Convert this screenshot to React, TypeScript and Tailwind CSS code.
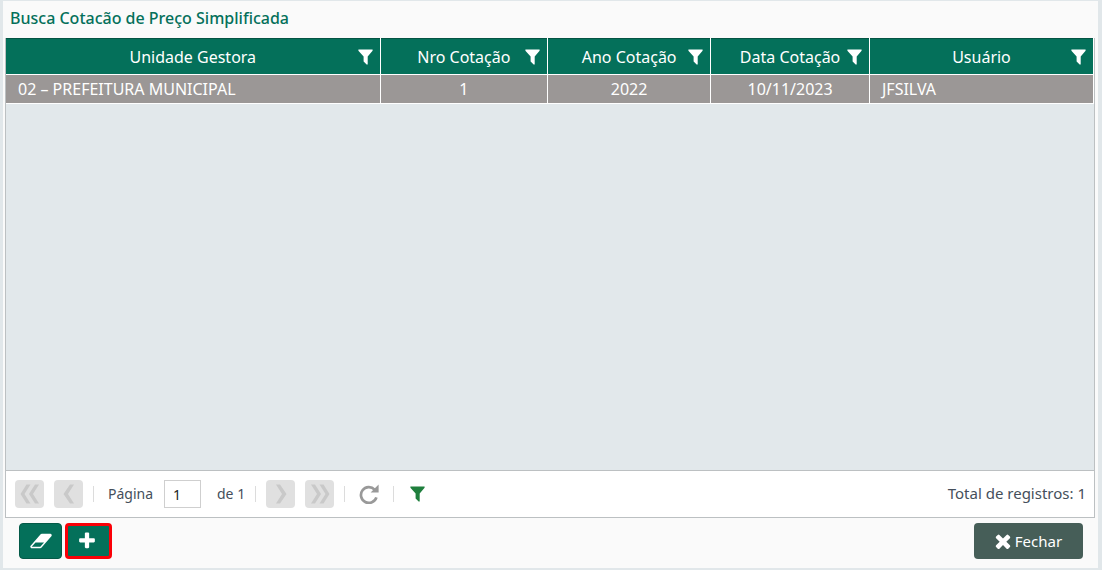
import type { ReactNode } from "react";

type IconProps = { className?: string };

function FilterIcon({ className }: IconProps) {
  return (
    <svg viewBox="0 0 15 16" className={className} fill="currentColor" aria-hidden="true">
      <path d="M0.4 0.5H14.6V1.8L9.7 7.4V15.4L8.6 15.4L5.6 12.6V7.4L0.4 1.8Z" />
    </svg>
  );
}

function EraserIcon() {
  return (
    <svg viewBox="0 0 2048 1792" className="h-5 w-6" fill="currentColor" aria-hidden="true">
      <path d="M960 1408l336-384h-768l-336 384h768zm1013-1077q15 34 9.5 71.5t-30.5 65.5l-896 1024q-38 44-96 44h-768q-38 0-69.5-20.5t-47.5-54.5q-15-34-9.5-71.5t30.5-65.5l896-1024q38-44 96-44h768q38 0 69.5 20.5t47.5 54.5z" />
    </svg>
  );
}

function PlusIcon() {
  return (
    <svg viewBox="0 0 1792 1792" className="size-5" fill="currentColor" aria-hidden="true">
      <path d="M1600 736v192q0 40-28 68t-68 28h-416v416q0 40-28 68t-68 28h-192q-40 0-68-28t-28-68v-416h-416q-40 0-68-28t-28-68v-192q0-40 28-68t68-28h416v-416q0-40 28-68t68-28h192q40 0 68 28t28 68v416h416q40 0 68 28t28 68z" />
    </svg>
  );
}

function TimesIcon() {
  return (
    <svg viewBox="240 240 1312 1312" className="size-4" fill="currentColor" aria-hidden="true">
      <path d="M1490 1322q0 40-28 68l-136 136q-28 28-68 28t-68-28l-294-294-294 294q-28 28-68 28t-68-28l-136-136q-28-28-28-68t28-68l294-294-294-294q-28-28-28-68t28-68l136-136q28-28 68-28t68 28l294 294 294-294q28-28 68-28t68 28l136 136q28 28 28 68t-28 68l-294 294 294 294q28 28 28 68z" />
    </svg>
  );
}

function RefreshIcon() {
  return (
    <svg viewBox="0 0 20 20" className="size-5" aria-hidden="true">
      <path d="M15.6 5.6A7.9 7.9 0 1 0 17.4 13.4" fill="none" stroke="currentColor" strokeWidth="2.7" />
      <path d="M19.6 0.6V8.4H11.6Z" fill="currentColor" />
    </svg>
  );
}

function Chevrons({ double, back }: { double?: boolean; back?: boolean }) {
  return (
    <svg
      viewBox="0 0 20 20"
      className={back ? "size-5 -scale-x-100" : "size-5"}
      fill="currentColor"
      aria-hidden="true"
    >
      {double ? (
        <>
          <path d="M1 0.5H5L11 10L5 19.5H1L7 10Z" />
          <path d="M9.5 0.5H13.5L19.5 10L13.5 19.5H9.5L15.5 10Z" />
        </>
      ) : (
        <path d="M5 0.5H9L15.5 10L9 19.5H5L11 10Z" />
      )}
    </svg>
  );
}

function PageButton({ label, children }: { label: string; children: ReactNode }) {
  return (
    <button
      type="button"
      disabled
      aria-label={label}
      className="flex h-7 w-[29px] items-center justify-center rounded bg-[#e0e0e0] text-[#c9c9c9]"
    >
      {children}
    </button>
  );
}

function Separator() {
  return <span className="h-4 w-px bg-[#dcdcdc]" />;
}

const columns = [
  { title: "Unidade Gestora", width: "w-[34.4%]" },
  { title: "Nro Cotação", width: "w-[15.4%]" },
  { title: "Ano Cotação", width: "w-[15%]" },
  { title: "Data Cotação", width: "w-[14.6%]" },
  { title: "Usuário", width: "w-[20.6%]" },
];

const rows = [["02 – PREFEITURA MUNICIPAL", "1", "2022", "10/11/2023", "JFSILVA"]];

export default function App() {
  return (
    <div className="flex min-h-screen flex-col bg-[#e1e7ea] pt-px pr-1 pb-[2px] pl-[3px] font-['Noto_Sans','Open_Sans',sans-serif] text-[#454f5b]">
      <main className="flex flex-1 flex-col bg-[#fafafa] pr-[3px] pl-[2px]">
        <h1 className="flex h-[37px] items-center px-[5px] pb-1 text-base font-medium text-[#04705a]">
          Busca Cotacão de Preço Simplificada
        </h1>

        <section className="flex flex-1 flex-col border-r border-b border-l border-[#bcc0c2] bg-[#e2e8eb]">
          <div className="flex-1">
            <table className="w-full table-fixed border-collapse text-base text-white">
              <thead>
                <tr className="h-9 border-t border-b border-t-[#045443] border-b-white bg-[#04705a]">
                  {columns.map((c) => (
                    <th key={c.title} scope="col" className={`${c.width} border-r border-white p-0 font-normal`}>
                      <div className="grid grid-cols-[1fr_auto_1fr] items-center px-[7px]">
                        <span className="col-start-2">{c.title}</span>
                        <button type="button" aria-label={`Filtrar ${c.title}`} className="justify-self-end">
                          <FilterIcon className="h-4 w-[15px]" />
                        </button>
                      </div>
                    </th>
                  ))}
                </tr>
              </thead>
              <tbody>
                {rows.map((row) => (
                  <tr key={row[1]} className="h-[29px] border-b border-white bg-[#9b9796]">
                    {row.map((value, i) => (
                      <td
                        key={columns[i].title}
                        className={`border-r border-white px-3 py-0 whitespace-nowrap ${
                          i === 0 || i === 4 ? "text-left" : "text-center"
                        }`}
                      >
                        {value}
                      </td>
                    ))}
                  </tr>
                ))}
              </tbody>
            </table>
          </div>

          <nav
            aria-label="Paginação"
            className="flex h-[47px] items-center border-t border-[#bcc0c2] bg-white pr-2 pl-[9px] text-sm"
          >
            <div className="flex items-center gap-[10px]">
              <PageButton label="Primeira página">
                <Chevrons double back />
              </PageButton>
              <PageButton label="Página anterior">
                <Chevrons back />
              </PageButton>
              <Separator />
            </div>
            <label htmlFor="page" className="ml-[14px] w-14">
              Página
            </label>
            <input
              id="page"
              type="text"
              defaultValue="1"
              className="h-7 w-[37px] border border-[#cfcfcf] bg-white px-2 text-sm text-[#222]"
            />
            <span className="mr-[10px] ml-4">de 1</span>
            <div className="flex items-center gap-[10px]">
              <Separator />
              <PageButton label="Próxima página">
                <Chevrons />
              </PageButton>
              <PageButton label="Última página">
                <Chevrons double />
              </PageButton>
              <Separator />
            </div>
            <button type="button" aria-label="Atualizar" className="mx-[14px] text-[#999]">
              <RefreshIcon />
            </button>
            <Separator />
            <button type="button" aria-label="Filtrar registros" className="ml-4 text-[#1f7f3d]">
              <FilterIcon className="h-4 w-[15px]" />
            </button>
            <p className="ml-auto text-[15px]">Total de registros: 1</p>
          </nav>
        </section>

        <footer className="flex items-center pt-[5px] pr-3 pb-[9px] pl-[14px] text-white">
          <button
            type="button"
            aria-label="Limpar"
            className="flex h-9 w-[43px] items-center justify-center rounded border border-[#045a48] bg-[#04705a]"
          >
            <EraserIcon />
          </button>
          <button
            type="button"
            aria-label="Adicionar"
            className="ml-[3px] flex h-9 w-[47px] items-center justify-center rounded border-3 border-[#fb0007] bg-[#04705a] pr-1"
          >
            <PlusIcon />
          </button>
          <button
            type="button"
            className="ml-auto flex h-9 w-[109px] items-center justify-center gap-1 rounded bg-[#465e58] text-[15px]"
          >
            <TimesIcon />
            Fechar
          </button>
        </footer>
      </main>
    </div>
  );
}
